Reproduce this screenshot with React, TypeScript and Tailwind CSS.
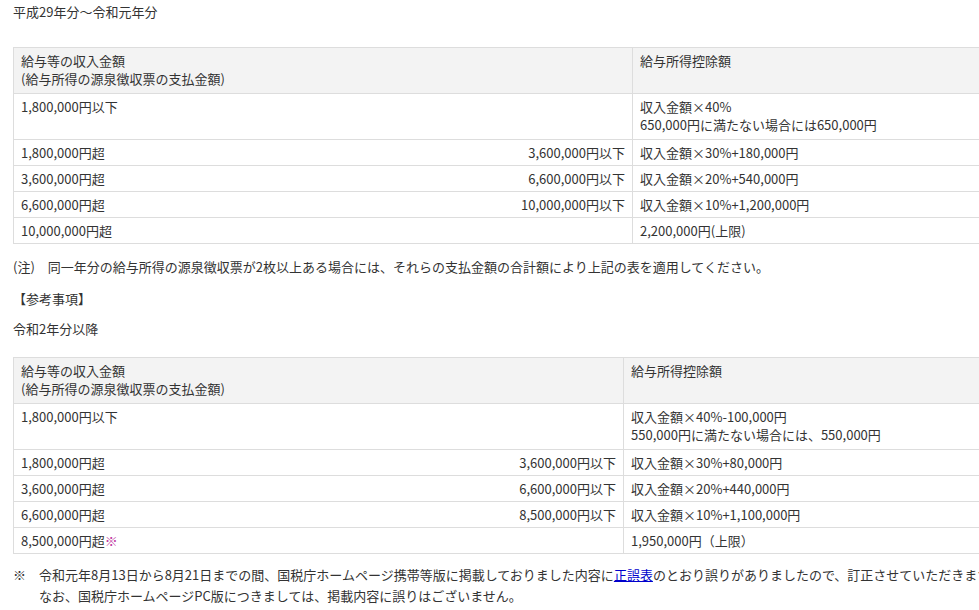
const td = 'border border-[#dddddd] px-[7px] pt-[4px] pb-[3px] align-top';

type Row = [string, string, string[]];

function Table({ col1, rows }: { col1: string; rows: Row[] }) {
  return (
    <table className="border-collapse w-[1100px] table-fixed leading-[18px]">
      <colgroup>
        <col style={{ width: col1 }} />
        <col />
      </colgroup>
      <thead>
        <tr className="bg-[#f3f3f3]">
          <th className={`${td} text-left font-normal pb-[5px]`}>
            給与等の収入金額<br />(給与所得の源泉徴収票の支払金額)
          </th>
          <th className={`${td} text-left font-normal`}>給与所得控除額</th>
        </tr>
      </thead>
      <tbody>
        {rows.map(([a, b, c], i) => (
          <tr key={i}>
            <td className={td}>
              <div className="flex justify-between">
                <span dangerouslySetInnerHTML={{ __html: a }} />
                <span>{b}</span>
              </div>
            </td>
            <td className={`${td} ${c.length > 1 ? 'pb-[5px]' : ''}`}>
              {c.map((l, j) => (
                <div key={j}>{l}</div>
              ))}
            </td>
          </tr>
        ))}
      </tbody>
    </table>
  );
}

export default function App() {
  return (
    <div
      className="w-[979px] h-[610px] overflow-hidden bg-white text-[#333333] text-[13px] leading-[19px] pl-[13px] pt-[2px]"
      style={{ fontFamily: '"Noto Sans CJK JP", sans-serif' }}
    >
      <p>平成29年分～令和元年分</p>
      <div className="mt-[26px]">
        <Table
          col1="619px"
          rows={[
            ['1,800,000円以下', '', ['収入金額×40%', '650,000円に満たない場合には650,000円']],
            ['1,800,000円超', '3,600,000円以下', ['収入金額×30%+180,000円']],
            ['3,600,000円超', '6,600,000円以下', ['収入金額×20%+540,000円']],
            ['6,600,000円超', '10,000,000円以下', ['収入金額×10%+1,200,000円']],
            ['10,000,000円超', '', ['2,200,000円(上限)']],
          ]}
        />
      </div>
      <p className="mt-[13px]">(注)　同一年分の給与所得の源泉徴収票が2枚以上ある場合には、それらの支払金額の合計額により上記の表を適用してください。</p>
      <p className="mt-[13px]">【参考事項】</p>
      <p className="mt-[11px]">令和2年分以降</p>
      <div className="mt-[19px]">
        <Table
          col1="610px"
          rows={[
            ['1,800,000円以下', '', ['収入金額×40%-100,000円', '550,000円に満たない場合には、550,000円']],
            ['1,800,000円超', '3,600,000円以下', ['収入金額×30%+80,000円']],
            ['3,600,000円超', '6,600,000円以下', ['収入金額×20%+440,000円']],
            ['6,600,000円超', '8,500,000円以下', ['収入金額×10%+1,100,000円']],
            ['8,500,000円超<span style="color:#c0399f">※</span>', '', ['1,950,000円（上限）']],
          ]}
        />
      </div>
      <div className="mt-[10px] whitespace-nowrap leading-[21px]">
        <p>※　令和元年8月13日から8月21日までの間、国税庁ホームページ携帯等版に掲載しておりました内容に<a className="text-[#0000cc] underline">正誤表</a>のとおり誤りがありましたので、訂正させていただきます。</p>
        <p className="pl-[26px]">なお、国税庁ホームページPC版につきましては、掲載内容に誤りはございません。</p>
      </div>
    </div>
  );
}
